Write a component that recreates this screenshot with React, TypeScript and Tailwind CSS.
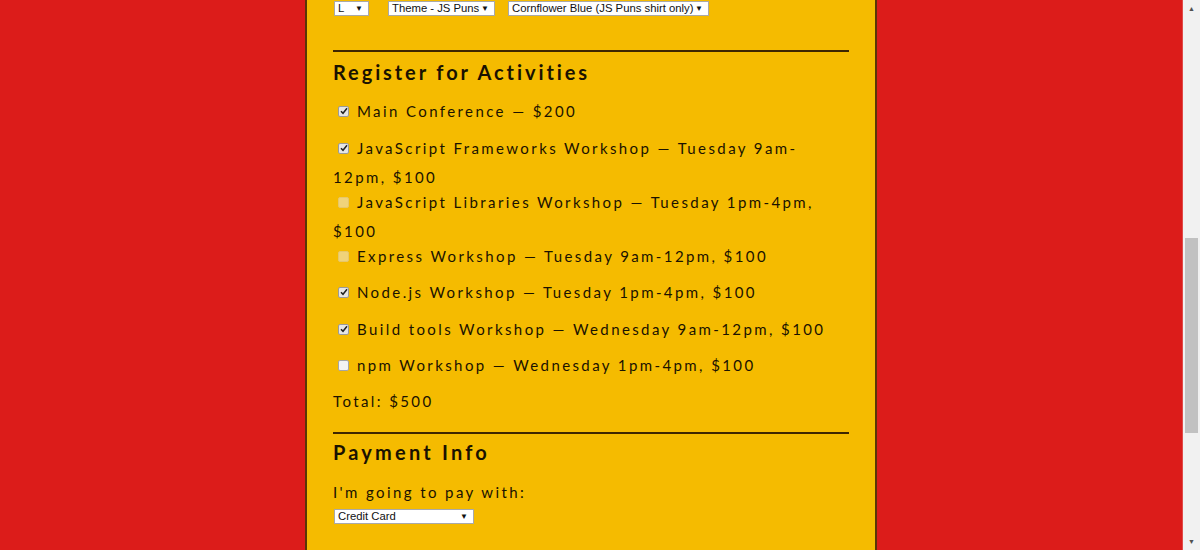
import React from "react";

const font = { fontFamily: "Lato, 'Noto Sans', sans-serif" };

function Select({ w, label }: { w: string; label: string }) {
  return (
    <div
      className={`${w} shrink-0 h-[15px] bg-white border border-[#a9a9a9] flex items-center justify-between pl-[3px] pr-[5px] text-[11.3px] leading-none text-[#111] tracking-normal whitespace-nowrap`}
      style={{ fontFamily: "'Liberation Sans', Arial, sans-serif" }}
    >
      <span>{label}</span>
      <span className="text-[8px]">▼</span>
    </div>
  );
}

function Box({ state }: { state: "checked" | "disabled" | "empty" }) {
  if (state === "checked")
    return (
      <span className="inline-flex w-[11px] h-[11px] rounded-[2px] bg-[#e6e6e6] border border-[#9a9a9a] items-center justify-center">
        <svg width="8" height="8" viewBox="0 0 8 8">
          <path d="M1 4.2 L3 6.3 L7 1.2" stroke="#222" strokeWidth="1.5" fill="none" />
        </svg>
      </span>
    );
  if (state === "disabled")
    return <span className="inline-block w-[11px] h-[11px] rounded-[2px] bg-[#f0d37a] border border-[#e6c76a]" />;
  return <span className="inline-block w-[11px] h-[11px] rounded-[2px] bg-[#f3f3f3] border border-[#a5a5a5]" />;
}

function Line({ children, mt, box }: { children: React.ReactNode; mt: string; box?: "checked" | "disabled" | "empty" }) {
  return (
    <div className={`${mt} h-[24px] flex items-center whitespace-nowrap`}>
      {box && (
        <span className="ml-[5px] mr-[8px] flex items-center">
          <Box state={box} />
        </span>
      )}
      <span>{children}</span>
    </div>
  );
}

export default function App() {
  return (
    <div className="w-[1200px] h-[550px] overflow-hidden flex bg-[#dc1c1a]" style={font}>
      <div className="flex-1 flex justify-center border-r border-[#e24a48]">
        <div className="w-[572px] h-full bg-[#f5bb00] border-x-2 border-[#5a3606] px-[26px] text-[#1a1200] tracking-[2.4px] text-[15px]">
          <div className="flex pt-[1px] pl-[1px]">
            <Select w="w-[35px]" label="L" />
            <div className="w-[19px] shrink-0" />
            <Select w="w-[107px]" label="Theme - JS Puns" />
            <div className="w-[13px] shrink-0" />
            <Select w="w-[201px]" label="Cornflower Blue (JS Puns shirt only)" />
          </div>
          <div className="mt-[34px] h-[2px] bg-[#3e2600]" />
          <h2 className="mt-[10px] h-[20px] leading-[20px] text-[20px] font-bold tracking-[2.9px]">Register for Activities</h2>
          <div className="mt-[17px]">
            <Line mt="mt-0" box="checked">Main Conference — $200</Line>
            <Line mt="mt-[13px]" box="checked">JavaScript Frameworks Workshop — Tuesday 9am-</Line>
            <Line mt="mt-[5px]">12pm, $100</Line>
            <Line mt="mt-[1px]" box="disabled">JavaScript Libraries Workshop — Tuesday 1pm-4pm,</Line>
            <Line mt="mt-[5px]">$100</Line>
            <Line mt="mt-[1px]" box="disabled">Express Workshop — Tuesday 9am-12pm, $100</Line>
            <Line mt="mt-[12px]" box="checked">Node.js Workshop — Tuesday 1pm-4pm, $100</Line>
            <Line mt="mt-[13px]" box="checked">Build tools Workshop — Wednesday 9am-12pm, $100</Line>
            <Line mt="mt-[12px]" box="empty">npm Workshop — Wednesday 1pm-4pm, $100</Line>
            <Line mt="mt-[12px]">Total: $500</Line>
          </div>
          <div className="mt-[19px] h-[2px] bg-[#3e2600]" />
          <h2 className="mt-[8px] h-[20px] leading-[20px] text-[20px] font-bold tracking-[3.2px]">Payment Info</h2>
          <div className="mt-[18px] h-[24px] flex items-center">I'm going to pay with:</div>
          <div className="mt-[5px] pl-[1px]">
            <Select w="w-[140px]" label="Credit Card" />
          </div>
        </div>
      </div>
      <div className="w-[17px] h-full bg-[#f1f1f1] flex flex-col items-center">
        <div className="h-[17px] flex items-center justify-center text-[#505050] text-[7px] leading-none">▲</div>
        <div className="mt-[221px] w-[13px] h-[195px] bg-[#c1c1c1]" />
        <div className="flex-1" />
        <div className="h-[17px] flex items-center justify-center text-[#505050] text-[7px] leading-none">▼</div>
      </div>
    </div>
  );
}
